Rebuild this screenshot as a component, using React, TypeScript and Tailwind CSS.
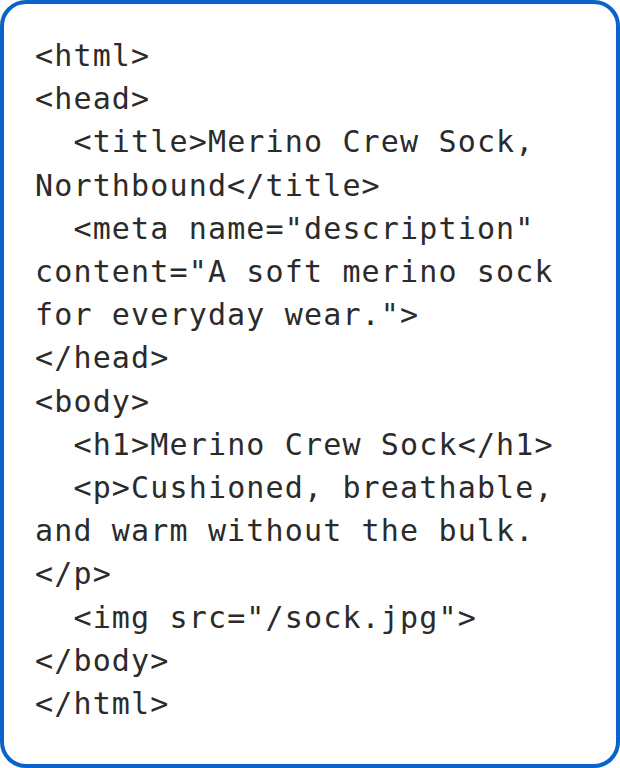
const code = `<html>
<head>
  <title>Merino Crew Sock, Northbound</title>
  <meta name="description" content="A soft merino sock for everyday wear.">
</head>
<body>
  <h1>Merino Crew Sock</h1>
  <p>Cushioned, breathable, and warm without the bulk.</p>
  <img src="/sock.jpg">
</body>
</html>`;

export default function App() {
  return (
    <div className="w-[620px] h-[768px] bg-white">
      <div className="h-full rounded-[26px] border-4 border-[#0a63c9] bg-white pl-[31px] pr-[30px] pt-[30px]">
        <pre className="m-0 whitespace-pre-wrap font-['DejaVu_Sans_Mono',monospace] text-[30px] leading-[43.2px] tracking-[1.15px] text-[#2b2b2b]">
          {code}
        </pre>
      </div>
    </div>
  );
}
